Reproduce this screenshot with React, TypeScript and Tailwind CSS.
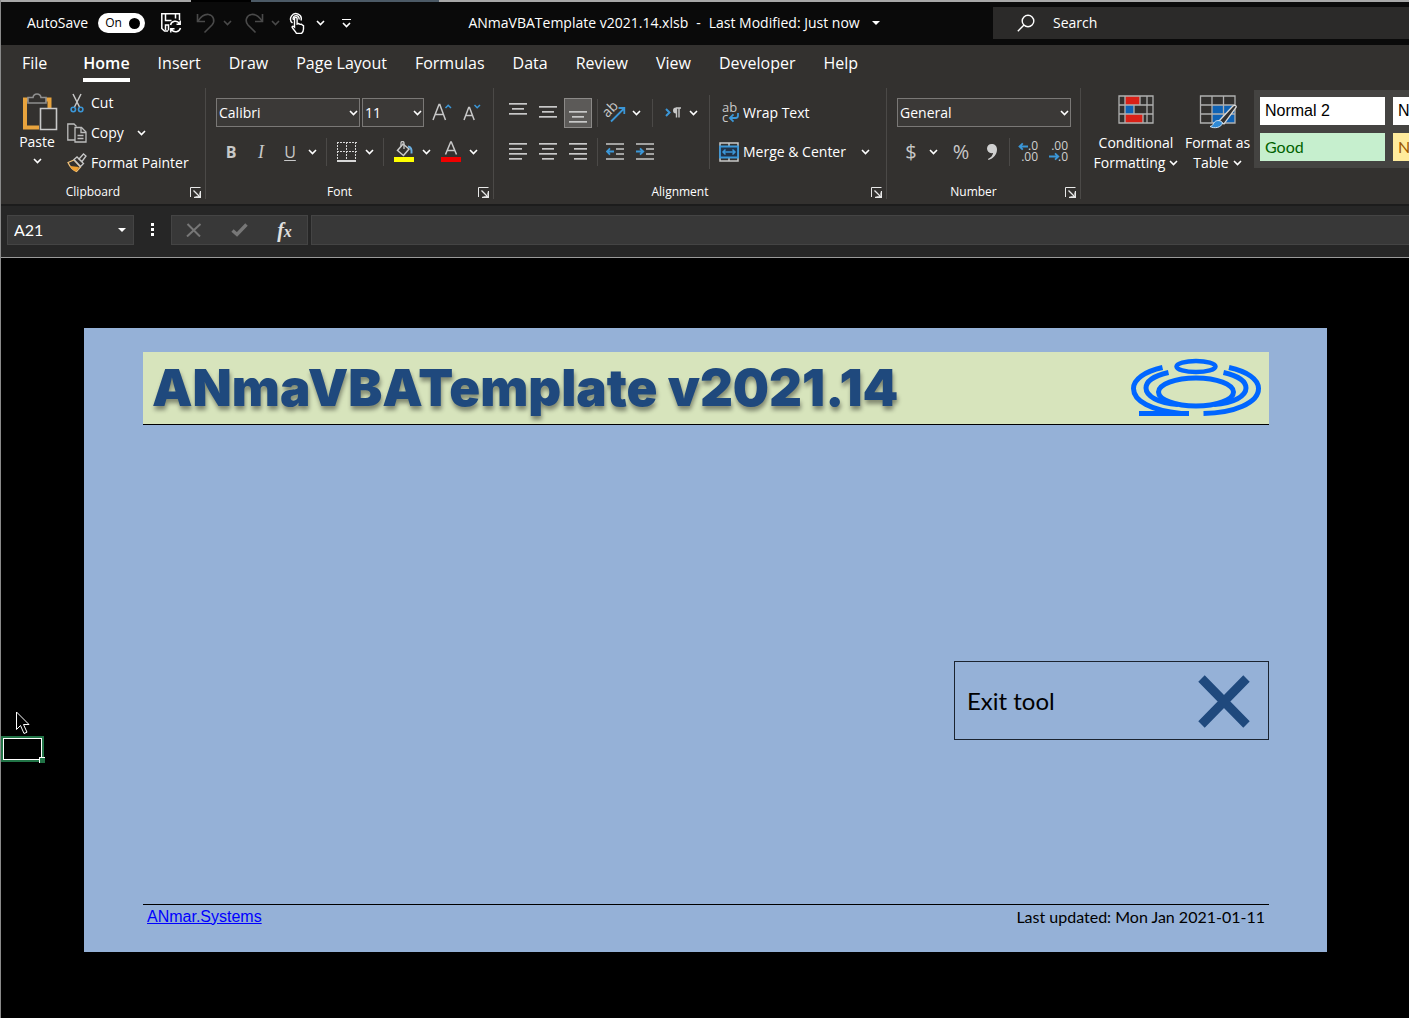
import type { ReactNode } from 'react';
import clsx from 'clsx';

const tabs = [
  'File',
  'Home',
  'Insert',
  'Draw',
  'Page Layout',
  'Formulas',
  'Data',
  'Review',
  'View',
  'Developer',
  'Help',
];

interface IconProps {
  className?: string;
}

function Chevron({ className }: IconProps) {
  return (
    <svg
      width="9"
      height="6"
      viewBox="0 0 9 6"
      fill="none"
      stroke="currentColor"
      strokeWidth="1.6"
      className={clsx('shrink-0', className)}
    >
      <path d="M1 1l3.5 3.5L8 1" />
    </svg>
  );
}

function Caret({ className }: IconProps) {
  return (
    <svg width="8" height="4" viewBox="0 0 8 4" className={className}>
      <path d="M0 0h8L4 4z" fill="currentColor" />
    </svg>
  );
}

function SaveIcon() {
  return (
    <svg width="22" height="22" viewBox="0 0 22 22" fill="none" stroke="#fff" strokeWidth="1.5">
      <path d="M8 19H4.5L1.8 16.5V1.8H19.5V8" />
      <path d="M5.500 2v6.500h6M15.500 2v4.500M8.500 18.500v-5.500h-3V18" />
      <path d="M10.500 13a5 5 0 0 1 9-1.500M20.200 8.500v3.700h-3.700" />
      <path d="M20.500 16a5 5 0 0 1-9 1.500M10.800 20.500v-3.700h3.700" />
    </svg>
  );
}

function UndoIcon({ className }: IconProps) {
  return (
    <svg
      width="20"
      height="22"
      viewBox="0 0 20 22"
      fill="none"
      stroke="#4a4a4a"
      strokeWidth="1.6"
      className={className}
    >
      <path d="M1.5 2v7.5H9" />
      <path d="M2 9C5 4.5 9 2 12.5 2.5c5 .7 7 6.5 3.5 10.5L8.500 20.500" />
    </svg>
  );
}

function TouchIcon() {
  return (
    <svg width="16" height="22" viewBox="0 0 16 22" fill="none" stroke="#fff" strokeWidth="1.4">
      <path d="M3.500 11A5.300 5.300 0 1 1 12 8.500" />
      <path d="M4.500 8a3 3 0 1 1 5.500-.5" />
      <path d="M5.500 15V6.500a1.300 1.300 0 0 1 2.600 0V12l1.500-.4 1.400.8 1.500-.1 1 .9 1 .4v3.400c0 2-1 3.500-2 4.500H7.500c-1-2.500-3.500-4-4.500-6.500.5-1 1.800-.8 2.500 0z" />
    </svg>
  );
}

function PasteIcon() {
  return (
    <svg width="41" height="39" viewBox="-5 0 41 39" fill="none">
      <path d="M8 6.500H3v28h14M22 6.500h5.500V15" stroke="#e8a33d" strokeWidth="4" />
      <path
        d="M6 10V4.500h5C11.500 2 13 1 15 1s3.500 1 4 3.500h5V10z"
        fill="#33312f"
        stroke="#8f8f8f"
        strokeWidth="1.6"
      />
      <path d="M18.500 15.500h16v21h-16z" fill="#33312f" stroke="#c8c8c8" strokeWidth="1.6" />
    </svg>
  );
}

function CutIcon() {
  return (
    <svg width="14" height="20" viewBox="0 0 14 20" fill="none">
      <path d="M3 1l6.500 13M11 1L4.500 14" stroke="#c8c8c8" strokeWidth="1.5" />
      <circle cx="3.3" cy="16.5" r="2.2" stroke="#3b97d8" strokeWidth="1.6" />
      <circle cx="10.7" cy="16.5" r="2.2" stroke="#3b97d8" strokeWidth="1.6" />
    </svg>
  );
}

function CopyIcon() {
  return (
    <svg width="20" height="20" viewBox="0 0 20 20" fill="none" stroke="#bdbdbd" strokeWidth="1.3">
      <path d="M8 17H.8V1H7l2.500 2.500" />
      <path d="M8 4.500h6.500l4.500 4.500V19H8z" />
      <path d="M14 5v4.500h5M10.500 12.500h6M10.500 15.500h6" />
    </svg>
  );
}

function PainterIcon() {
  return (
    <svg width="20" height="20" viewBox="0 0 20 20" fill="none">
      <path d="M1 9.500l6-2.500 6.500 7-4 4.500C6 17 3 14 1 9.500z" stroke="#f0c078" strokeWidth="1.3" />
      <path d="M3 13l9 1-3 4.500C7 17.500 4.500 16 3 13z" fill="#f0a030" />
      <path d="M7 6.500l3-2.500 6.500 6.500-3 3z" fill="#33312f" stroke="#c8c8c8" strokeWidth="1.3" />
      <path d="M12 6l4.500-5 2.500 2-4 5.500z" fill="#33312f" stroke="#c8c8c8" strokeWidth="1.3" />
    </svg>
  );
}

function LauncherIcon() {
  return (
    <svg width="11" height="11" viewBox="0 0 11 11" fill="none" stroke="#e8e8e8">
      <path d="M.5 10V.5H10.500" />
      <path d="M10.500 4v6.500H4M3.500 3.500L10 10M10 5.500V10H5.500" strokeWidth="1.3" />
    </svg>
  );
}

function GrowFontIcon() {
  return (
    <svg width="20" height="20" viewBox="0 0 20 20" fill="none" strokeWidth="1.5">
      <path d="M1 17L7 1.500h.8L13.500 17M3.200 11.500h8.400" stroke="#c8c8c8" />
      <path d="M13.500 5L16.200 2.300 19 5" stroke="#3b97d8" />
    </svg>
  );
}

function ShrinkFontIcon() {
  return (
    <svg width="18" height="20" viewBox="0 0 18 20" fill="none" strokeWidth="1.5">
      <path d="M1 17L5.700 4.500h.8L11.200 17M3 12.500h6.500" stroke="#c8c8c8" />
      <path d="M11.500 2l2.700 2.700L17 2" stroke="#3b97d8" />
    </svg>
  );
}

function BordersIcon() {
  return (
    <svg
      width="20"
      height="20"
      viewBox="0 0 20 20"
      fill="none"
      stroke="#d8d8d8"
      shapeRendering="crispEdges"
    >
      <path d="M0 .5h20M0 9.500h20M.5 0v18M9.500 0v18M18.500 0v18" strokeDasharray="2 1" />
      <path d="M0 18.500h19" strokeWidth="2" />
    </svg>
  );
}

function FillIcon() {
  return (
    <svg width="20" height="22" viewBox="0 0 20 22" fill="none">
      <path d="M9 3L3.500 9.500l6 5L15 8z" stroke="#c8c8c8" strokeWidth="1.5" />
      <path d="M7 5.500V2a1.500 1.500 0 0 1 3 0v6" stroke="#c8c8c8" strokeWidth="1.3" />
      <path d="M14 5.500c3 .5 4 3 3.500 7" stroke="#6aaee0" strokeWidth="2" />
      <path d="M0 16h20v5H0z" fill="#ffff00" />
    </svg>
  );
}

function FontColorIcon() {
  return (
    <svg width="20" height="22" viewBox="0 0 20 22" fill="none">
      <path d="M4.500 13.500L9.700 1h.6l5.200 12.500M6.300 9.500h7.400" stroke="#c8c8c8" strokeWidth="1.5" />
      <path d="M0 16h20v5H0z" fill="#f00000" />
    </svg>
  );
}

// rows are [x, y, width] of each stroke
function LinesIcon({ rows }: { rows: number[][] }) {
  return (
    <svg width="18" height="22" viewBox="0 0 18 22" fill="#c8c8c8">
      {rows.map(([x, y, w]) => (
        <rect key={y} x={x} y={y} width={w} height="1.7" />
      ))}
    </svg>
  );
}

function IndentIcon({ flip }: { flip?: boolean }) {
  return (
    <svg width="18" height="22" viewBox="0 0 18 22" fill="none">
      <path d="M0 3h18M10 8h8M10 13h8M0 18h18" stroke="#c8c8c8" strokeWidth="1.7" />
      {flip ? (
        <path d="M0 10.500h7M4 7.300l3.300 3.200L4 13.700" stroke="#3b97d8" strokeWidth="1.8" />
      ) : (
        <path d="M8 10.500H1M4 7.300L.9 10.500 4 13.700" stroke="#3b97d8" strokeWidth="1.8" />
      )}
    </svg>
  );
}

function OrientationIcon() {
  return (
    <svg width="22" height="22" viewBox="0 0 22 22" fill="none" className="overflow-visible">
      <text
        x="1"
        y="14"
        transform="rotate(-45 5 12)"
        fontSize="14"
        fill="#c8c8c8"
        className="font-['Open_Sans',sans-serif]"
      >
        ab
      </text>
      <path d="M7 19.500L20 6.500M14.500 6H20.300V12" stroke="#3b97d8" strokeWidth="1.8" />
    </svg>
  );
}

function DirectionIcon() {
  return (
    <svg width="18" height="16" viewBox="0 0 18 16" fill="none">
      <path d="M2 4L5.500 7.500 2 11" stroke="#3b97d8" strokeWidth="2" />
      <path d="M12.500 12.500V3M15 12.500V3M17 3h-5" stroke="#c8c8c8" strokeWidth="1.4" />
      <path d="M12 2.400a3 3 0 0 0 0 6z" fill="#c8c8c8" />
    </svg>
  );
}

function WrapIcon() {
  return (
    <svg width="20" height="22" viewBox="0 0 20 22" fill="none" className="overflow-visible">
      <g fill="#c8c8c8" fontSize="13" className="font-['Open_Sans',sans-serif]">
        <text x="3" y="10">ab</text>
        <text x="3" y="20">c</text>
      </g>
      <path
        d="M19 11v2.500q0 2.500-2.500 2.500H11M14.500 12.300L10.800 16l3.700 3.700"
        stroke="#3b97d8"
        strokeWidth="1.8"
      />
    </svg>
  );
}

function MergeIcon() {
  return (
    <svg width="20" height="20" viewBox="0 0 20 20" fill="none">
      <path d="M1 1h18v18H1zM10 1v18" stroke="#c8c8c8" strokeWidth="1.5" />
      <path d="M1 4.500h18v11H1z" fill="#20334a" stroke="#3b97d8" strokeWidth="1.8" />
      <path
        d="M4 10h12M6.500 7.500L4 10l2.500 2.500M13.500 7.500L16 10l-2.500 2.500"
        stroke="#3b97d8"
        strokeWidth="1.5"
      />
    </svg>
  );
}

function DecimalIcon({ decrease }: { decrease?: boolean }) {
  return (
    <svg width="21" height="22" viewBox="0 0 21 22" fill="none" className="overflow-visible">
      <g fill="#d0d0d0" fontSize="12" textAnchor="end" className="font-['Open_Sans',sans-serif]">
        <text x="20" y="9">{decrease ? '.00' : '.0'}</text>
        <text x="20" y="20">{decrease ? '.0' : '.00'}</text>
      </g>
      {decrease ? (
        <path d="M1 15.500h9M7 12.300l3.300 3.200L7 18.700" stroke="#3b97d8" strokeWidth="1.8" />
      ) : (
        <path d="M10 5.500H1.500M4.800 2.300L1.500 5.500l3.300 3.200" stroke="#3b97d8" strokeWidth="1.8" />
      )}
    </svg>
  );
}

function ConditionalIcon() {
  return (
    <svg width="36" height="36" viewBox="0 0 36 36" fill="none">
      <path d="M7 3h15v9H7zM7 21h18v9H7z" fill="#d92017" />
      <path d="M7 12h9v9H7z" fill="#0f62b4" />
      <path
        d="M1 3h34v27H1zM1 12h34M1 21h34M7 3v27M29 3v27M22 3v9M25 21v9M16 12v9"
        stroke="#b0b0b0"
        strokeWidth="1.3"
      />
    </svg>
  );
}

function FormatTableIcon() {
  return (
    <svg width="38" height="36" viewBox="0 0 38 36" fill="none">
      <path d="M13 12h23v18H13z" fill="#0f62b4" />
      <path
        d="M1.500 3h34.500v27H1.500zM1.500 12H36M1.500 21H36M13 3v27M24.500 3v27"
        stroke="#b0b0b0"
        strokeWidth="1.3"
      />
      <path
        d="M20 28L33.500 13.500c2-2 4.500-1 3.500 1L25 31z"
        fill="#33312f"
        stroke="#d8d8d8"
        strokeWidth="1.3"
      />
      <path
        d="M11 33.500c3-.5 3-3 4.500-4.500 2.500-2.500 7-1.500 8 1-1 4.500-8 6-12.500 3.500z"
        fill="#2f8ad6"
        stroke="#cfe4f5"
      />
    </svg>
  );
}

function AnmarLogo() {
  return (
    <svg width="130" height="60" viewBox="0 0 130 60" fill="none" stroke="#0066ff" strokeWidth="5">
      <ellipse cx="65" cy="8.500" rx="19.500" ry="5.500" strokeWidth="4.500" />
      <ellipse cx="65" cy="34" rx="37.500" ry="14" />
      <path d="M31.500 9.500C14 13.500 2.500 21 2.500 30.500 2.500 43 20 52.500 50 55.500" />
      <path d="M8 55.500h50" />
      <path d="M37.500 14.500C22 18 15 24 15 30c0 8 12 15 32 16.500" />
      <path d="M98 9.500c18 4 29.500 11.500 29.500 21C127.500 45 103 55 72.500 55.500" />
      <path d="M92.500 14.500c15.500 3.500 22.500 9.500 22.500 15.500 0 8-12 15-32 16.500" />
    </svg>
  );
}

interface ToolProps {
  label: string;
  children: ReactNode;
  className?: string;
}

function Tool({ label, children, className }: ToolProps) {
  return (
    <button
      type="button"
      aria-label={label}
      className={clsx('flex h-[30px] shrink-0 items-center justify-center', className ?? 'w-[30px]')}
    >
      {children}
    </button>
  );
}

function MenuArrow({ label, className }: { label: string; className?: string }) {
  return (
    <button
      type="button"
      aria-label={label}
      className={clsx('flex h-[30px] w-4 shrink-0 items-center justify-center', className)}
    >
      <Chevron />
    </button>
  );
}

function Divider({ className }: IconProps) {
  return <span className={clsx('w-px shrink-0 bg-[#4b4947]', className ?? 'mx-[6px] h-7')} />;
}

interface ComboProps {
  label: string;
  value: string;
  className: string;
}

function Combo({ label, value, className }: ComboProps) {
  return (
    <div className={clsx('relative shrink-0', className)}>
      <select
        aria-label={label}
        className="block h-[29px] w-full appearance-none border border-[#7a7876] bg-[#3b3937] px-[2px] text-sm"
      >
        <option>{value}</option>
      </select>
      <Chevron className="pointer-events-none absolute top-3 right-[2px]" />
    </div>
  );
}

interface GroupProps {
  title: string;
  children: ReactNode;
  className?: string;
}

function Group({ title, children, className }: GroupProps) {
  return (
    <section className={clsx('flex h-[111px] shrink-0 flex-col border-r border-[#4b4947]', className)}>
      <div className="flex flex-1">{children}</div>
      <div className="flex h-[14px] items-center">
        <span className="flex-1 text-center text-xs">{title}</span>
        <button type="button" aria-label={`${title} settings`} className="flex w-5 justify-center">
          <LauncherIcon />
        </button>
      </div>
    </section>
  );
}

function ToolRows({ children, className }: { children: ReactNode; className?: string }) {
  return <div className={clsx('flex flex-col gap-[9px] pt-[10px]', className)}>{children}</div>;
}

function TitleBar() {
  return (
    <header className="flex h-[43px] items-center bg-[#0a0a0a] pb-px text-sm">
      <div className="flex shrink-0 items-center pl-[26px]">
        <label htmlFor="autosave">AutoSave</label>
        <span className="relative ml-[10px] flex">
          <input
            id="autosave"
            type="checkbox"
            defaultChecked
            className="h-5 w-[47px] appearance-none rounded-full bg-white"
          />
          <span className="pointer-events-none absolute inset-0 flex items-center justify-between pr-[5px] pl-[7px] text-xs text-black">
            On
            <span className="size-[11px] rounded-full bg-black" />
          </span>
        </span>
        <button type="button" aria-label="Save" className="ml-[15px]">
          <SaveIcon />
        </button>
        <button type="button" aria-label="Undo" className="ml-[14px]">
          <UndoIcon />
        </button>
        <MenuArrow label="Undo history" className="ml-[3px] text-[#4a4a4a]" />
        <button type="button" aria-label="Redo" className="ml-[9px]">
          <UndoIcon className="-scale-x-100" />
        </button>
        <MenuArrow label="Redo history" className="ml-[3px] text-[#4a4a4a]" />
        <button type="button" aria-label="Touch mode" className="ml-[6px]">
          <TouchIcon />
        </button>
        <MenuArrow label="Touch mode options" className="ml-[7px]" />
        <button
          type="button"
          aria-label="Customize toolbar"
          className="ml-[14px] flex flex-col items-center gap-[2px]"
        >
          <span className="h-px w-[9px] bg-white" />
          <Chevron />
        </button>
      </div>
      <button type="button" className="flex flex-1 items-center justify-center gap-3 pl-1">
        <span className="flex gap-2">
          ANmaVBATemplate v2021.14.xlsb
          <span>-</span>
          <span>Last Modified: Just now</span>
        </span>
        <Caret />
      </button>
      <label className="flex h-8 w-[416px] items-center bg-[#2b2a29] pl-6">
        <svg width="18" height="18" viewBox="0 0 18 18" fill="none" stroke="#fff" strokeWidth="1.4">
          <circle cx="11" cy="7" r="5.8" />
          <path d="M7 11L.8 17.200" />
        </svg>
        <input
          type="search"
          aria-label="Search"
          placeholder="Search"
          className="ml-[18px] min-w-0 flex-1 bg-transparent placeholder:text-white"
        />
      </label>
    </header>
  );
}

function RibbonTabs() {
  return (
    <nav className="flex h-10 items-center gap-7 pl-[21px]">
      {tabs.map((tab) => (
        <button
          key={tab}
          type="button"
          className={clsx(
            'h-[34px] border-b-4 text-base whitespace-nowrap',
            tab === 'Home' ? 'ml-2 border-white font-semibold' : 'border-transparent'
          )}
        >
          {tab}
        </button>
      ))}
    </nav>
  );
}

function ClipboardGroup() {
  return (
    <Group title="Clipboard" className="w-[205px]">
      <button type="button" className="ml-3 flex w-12 flex-col items-center pt-[5px] text-sm">
        <PasteIcon />
        Paste
        <Chevron className="mt-[6px]" />
      </button>
      <div className="ml-[6px] flex flex-col text-sm">
        <button type="button" className="flex h-[30px] items-center">
          <span className="flex w-6 justify-center pr-1">
            <CutIcon />
          </span>
          Cut
        </button>
        <div className="flex">
          <button type="button" className="flex h-[30px] items-center gap-1">
            <CopyIcon />
            Copy
          </button>
          <MenuArrow label="Copy options" className="ml-[10px]" />
        </div>
        <button type="button" className="flex h-[30px] items-center gap-1">
          <PainterIcon />
          Format Painter
        </button>
      </div>
    </Group>
  );
}

function FontGroup() {
  return (
    <Group title="Font" className="w-72">
      <ToolRows className="pl-[10px]">
        <div className="flex h-[30px] items-start">
          <Combo label="Font name" value="Calibri" className="w-36" />
          <Combo label="Font size" value="11" className="ml-[2px] w-[62px]" />
          <Tool label="Increase font size" className="ml-[3px] w-[30px]">
            <GrowFontIcon />
          </Tool>
          <Tool label="Decrease font size">
            <ShrinkFontIcon />
          </Tool>
        </div>
        <div className="flex items-center">
          <Tool label="Bold">
            <b className="text-base text-[#c8c8c8]">B</b>
          </Tool>
          <Tool label="Italic">
            <i className="font-['Liberation_Serif',serif] text-lg text-[#c8c8c8]">I</i>
          </Tool>
          <Tool label="Underline" className="w-7">
            <u className="text-base text-[#c8c8c8] underline-offset-2">U</u>
          </Tool>
          <MenuArrow label="Underline options" />
          <Divider />
          <Tool label="Borders" className="w-7">
            <BordersIcon />
          </Tool>
          <MenuArrow label="Border options" />
          <Divider />
          <Tool label="Fill color" className="w-7">
            <FillIcon />
          </Tool>
          <MenuArrow label="Fill color options" />
          <Tool label="Font color" className="ml-[3px] w-7">
            <FontColorIcon />
          </Tool>
          <MenuArrow label="Font color options" />
        </div>
      </ToolRows>
    </Group>
  );
}

function AlignmentGroup() {
  return (
    <Group title="Alignment" className="w-[393px]">
      <ToolRows className="pl-[9px]">
        <div className="flex items-center">
          <Tool label="Top align">
            <LinesIcon rows={[[0, 1, 18], [3, 6, 12], [0, 11, 18]]} />
          </Tool>
          <Tool label="Middle align">
            <LinesIcon rows={[[0, 4, 18], [3, 9, 12], [0, 14, 18]]} />
          </Tool>
          <Tool label="Bottom align" className="mx-px w-7 border border-[#8c8a88] bg-[#5c5a58]">
            <LinesIcon rows={[[0, 9, 18], [3, 14, 12], [0, 19, 18]]} />
          </Tool>
          <Divider className="mx-1 h-7" />
          <Tool label="Orientation" className="w-[26px]">
            <OrientationIcon />
          </Tool>
          <MenuArrow label="Orientation options" />
          <Divider className="mx-2 h-7" />
          <Tool label="Text direction" className="w-6">
            <DirectionIcon />
          </Tool>
          <MenuArrow label="Text direction options" />
        </div>
        <div className="flex items-center">
          <Tool label="Align left">
            <LinesIcon rows={[[0, 2, 18], [0, 7, 13], [0, 12, 18], [0, 17, 13]]} />
          </Tool>
          <Tool label="Center">
            <LinesIcon rows={[[0, 2, 18], [3, 7, 12], [0, 12, 18], [3, 17, 12]]} />
          </Tool>
          <Tool label="Align right">
            <LinesIcon rows={[[0, 2, 18], [5, 7, 13], [0, 12, 18], [5, 17, 13]]} />
          </Tool>
          <Divider className="mx-1 h-7" />
          <Tool label="Decrease indent" className="w-[26px]">
            <IndentIcon />
          </Tool>
          <Tool label="Increase indent" className="ml-1 w-[26px]">
            <IndentIcon flip />
          </Tool>
        </div>
      </ToolRows>
      <Divider className="ml-2 mr-[9px] mt-[7px] h-[74px]" />
      <ToolRows className="text-sm whitespace-nowrap">
        <button type="button" className="flex h-[30px] items-center gap-1">
          <WrapIcon />
          Wrap Text
        </button>
        <div className="flex">
          <button type="button" className="flex h-[30px] items-center gap-1">
            <MergeIcon />
            Merge &amp; Center
          </button>
          <MenuArrow label="Merge options" className="ml-3" />
        </div>
      </ToolRows>
    </Group>
  );
}

function NumberGroup() {
  return (
    <Group title="Number" className="w-[194px]">
      <ToolRows className="pl-[10px]">
        <div className="flex h-[30px] items-start">
          <Combo label="Number format" value="General" className="w-[174px]" />
        </div>
        <div className="flex items-center text-[#c8c8c8]">
          <Tool label="Accounting format" className="w-7">
            <span className="text-xl">$</span>
          </Tool>
          <MenuArrow label="Accounting options" className="text-white" />
          <Tool label="Percent style" className="ml-[3px] w-[34px]">
            <span className="text-xl">%</span>
          </Tool>
          <Tool label="Comma style" className="w-7">
            <svg width="10" height="16" viewBox="0 0 10 16" fill="#d0d0d0">
              <path d="M4.500 0C7.800 0 10 2 10 5.500 10 10.500 6.500 14.500 1.500 16L1 15c3-1.500 4.800-3.500 5-6C2.500 9.700 0 7.800 0 4.600 0 2 2 0 4.500 0z" />
            </svg>
          </Tool>
          <Divider className="mx-[3px] h-7" />
          <Tool label="Increase decimal">
            <DecimalIcon />
          </Tool>
          <Tool label="Decrease decimal">
            <DecimalIcon decrease />
          </Tool>
        </div>
      </ToolRows>
    </Group>
  );
}

function StylesGroup() {
  return (
    <section className="flex min-w-0 flex-1 pl-[10px] text-sm">
      <button
        type="button"
        className="flex w-[90px] shrink-0 flex-col items-center pt-[5px] whitespace-nowrap"
      >
        <ConditionalIcon />
        <span className="mt-1 leading-5">Conditional</span>
        <span className="flex items-center gap-1 leading-5">
          Formatting <Chevron />
        </span>
      </button>
      <button
        type="button"
        className="flex w-[73px] shrink-0 flex-col items-center pt-[5px] whitespace-nowrap"
      >
        <FormatTableIcon />
        <span className="mt-1 leading-5">Format as</span>
        <span className="flex items-center gap-1 leading-5">
          Table <Chevron />
        </span>
      </button>
      <div className="mt-[2px] flex h-[78px] min-w-0 flex-1 gap-2 overflow-hidden bg-[#444341] py-[7px] pl-[6px] text-base text-black">
        <div className="flex w-[125px] shrink-0 flex-col gap-2">
          <button
            type="button"
            className="h-7 bg-white px-[5px] text-left font-['Liberation_Sans',Arial,sans-serif]"
          >
            Normal 2
          </button>
          <button
            type="button"
            className="h-7 bg-[#c6efce] px-[5px] text-left font-['Lato',sans-serif] text-[#006100]"
          >
            Good
          </button>
        </div>
        <div className="flex min-w-0 flex-1 flex-col gap-2">
          <button
            type="button"
            className="h-7 bg-white pl-[5px] text-left font-['Liberation_Sans',Arial,sans-serif]"
          >
            N
          </button>
          <button
            type="button"
            className="h-7 bg-[#ffeb9c] pl-[5px] text-left font-['Lato',sans-serif] text-[#9c5700]"
          >
            N
          </button>
        </div>
      </div>
    </section>
  );
}

function FormulaBar() {
  return (
    <div className="flex h-[54px] items-center border-t-2 border-b border-t-[#1c1c1c] border-b-[#9a9a9a] bg-[#262626] pb-1 pl-[6px]">
      <div className="flex h-[30px] w-[127px] shrink-0 items-center border border-[#444] bg-[#383838] pr-[7px]">
        <input
          aria-label="Name box"
          defaultValue="A21"
          className="min-w-0 flex-1 bg-transparent pl-[6px] font-['Lato',sans-serif] text-base"
        />
        <button type="button" aria-label="Named ranges">
          <Caret />
        </button>
      </div>
      <div className="mx-[17px] flex flex-col gap-[2px]">
        <span className="size-[3px] bg-white" />
        <span className="size-[3px] bg-white" />
        <span className="size-[3px] bg-white" />
      </div>
      <div className="flex h-[30px] shrink-0 items-center border border-[#444] bg-[#383838]">
        <Tool label="Cancel" className="w-11">
          <svg width="16" height="14" viewBox="0 0 16 14" fill="none" stroke="#777" strokeWidth="2">
            <path d="M1.500 1L14 13.500M14.500 1L1 13.500" />
          </svg>
        </Tool>
        <Tool label="Enter" className="w-[46px]">
          <svg width="17" height="14" viewBox="0 0 17 14" fill="none" stroke="#777" strokeWidth="3.400">
            <path d="M1.500 7.500L6 11.500 15.500 1.500" />
          </svg>
        </Tool>
        <Tool label="Insert function" className="w-[45px]">
          <span className="font-['Liberation_Serif',serif] text-xl font-bold text-[#e0e0e0] italic">
            f<span className="text-base">x</span>
          </span>
        </Tool>
      </div>
      <input
        aria-label="Formula"
        className="ml-[3px] h-[30px] min-w-0 flex-1 border border-r-0 border-[#444] bg-[#383838] px-2 text-base"
      />
    </div>
  );
}

function Sheet() {
  return (
    <main className="relative flex flex-1 bg-black pt-[70px] pr-[82px] pb-[66px] pl-[83px]">
      <div className="absolute top-[478px] left-0 h-[26px] w-[43px] border-2 border-[#217346]">
        <div className="size-full border border-white" />
        <span className="absolute -right-[3px] -bottom-[3px] size-[6px] border-t border-l border-white bg-[#217346]" />
      </div>
      <svg
        width="14"
        height="24"
        viewBox="0 0 14 24"
        className="absolute top-[453px] left-[15px]"
        fill="#000"
        stroke="#fff"
      >
        <path d="M.5 1v17.500l4-4 3.500 8 3-1.300-3.500-7.700h5.500z" />
      </svg>
      <div className="flex flex-1 flex-col bg-[#95b1d7] pt-6 pr-[58px] pb-6 pl-[59px] text-black">
        <div className="flex h-[73px] items-center justify-between border-b border-black bg-[#d7e4bc] pr-2 pl-[9px]">
          <h1 className="font-['Inter',sans-serif] text-[51px] font-black whitespace-nowrap text-[#1f497d] [text-shadow:1px_4px_4px_rgba(0,0,0,0.4)]">
            ANmaVBATemplate v2021.14
          </h1>
          <AnmarLogo />
        </div>
        <button
          type="button"
          className="mt-[236px] flex h-[79px] w-[315px] items-center justify-between self-end border border-[#1b2430] pr-[18px] pl-3 font-['Lato',sans-serif] text-2xl"
        >
          Exit tool
          <svg width="52" height="54" viewBox="0 0 52 54" fill="none" stroke="#1f497d" strokeWidth="9">
            <path d="M3.500 4.500l45 46M48.500 4.500l-45 46" />
          </svg>
        </button>
        <footer className="mt-auto flex h-6 items-center justify-between border-t border-black px-1 text-base">
          <a href="#" className="font-['Liberation_Sans',Arial,sans-serif] text-[#0000ff] underline">
            ANmar.Systems
          </a>
          <span className="font-['Lato',sans-serif]">Last updated: Mon Jan 2021-01-11</span>
        </footer>
      </div>
    </main>
  );
}

export default function App() {
  return (
    <div className="flex min-h-screen flex-col overflow-hidden border-l border-[#8a8a8a] bg-black font-['Open_Sans',sans-serif] text-white">
      <div className="flex h-[2px]">
        <span className="w-[190px] bg-[#a8a8a8]" />
        <span className="w-[60px] bg-black" />
        <span className="w-[188px] bg-[#4c5a66]" />
        <span className="flex-1 bg-[#a8a8a8]" />
      </div>
      <TitleBar />
      <div className="bg-[#33312f]">
        <RibbonTabs />
        <div className="flex pt-[3px] pb-[5px]">
          <ClipboardGroup />
          <FontGroup />
          <AlignmentGroup />
          <NumberGroup />
          <StylesGroup />
        </div>
      </div>
      <FormulaBar />
      <Sheet />
    </div>
  );
}
